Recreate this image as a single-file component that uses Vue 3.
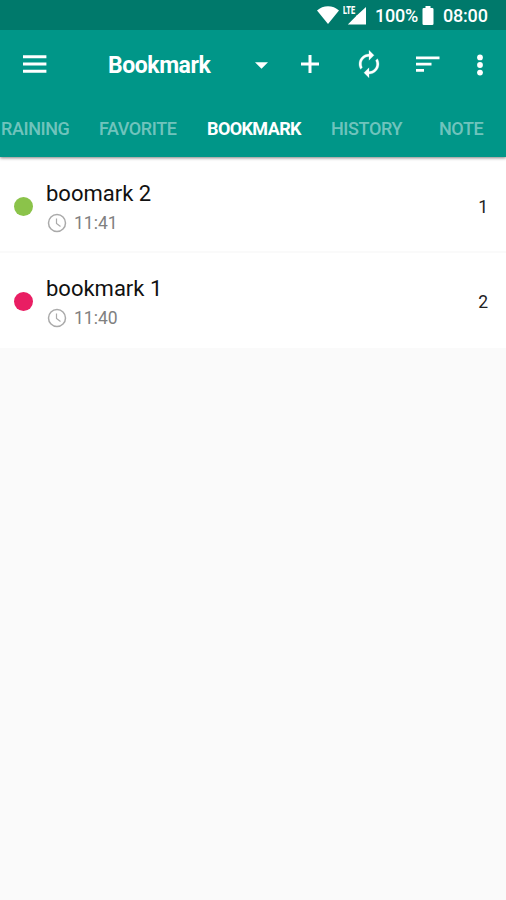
<script setup>
</script>

<template>
  <div class="screen">
    <header class="header">
      <div class="status">
        <svg class="wifi" width="22" height="18" viewBox="0 0 22 18">
          <path fill="#fff" d="M0 4.500C6 -1.200 16 -1.200 22 4.500L11 18z" />
        </svg>
        <svg class="signal" width="24" height="20" viewBox="0 0 24 20">
          <text x="0" y="9" textLength="12" lengthAdjust="spacingAndGlyphs">LTE</text>
          <path fill="#fff" d="M23 2V19.500H4.800L13 11.200V10.600H13.700z" />
        </svg>
        <span class="percent">100%</span>
        <svg class="battery" width="12" height="20" viewBox="0 0 12 20">
          <path fill="#fff" d="M3.500 0h5v2h1.700q1.300 0 1.300 1.300v14.400q0 1.300-1.300 1.300H1.800q-1.300 0-1.300-1.300V3.300Q.5 2 1.800 2h1.700z" />
        </svg>
        <span class="clock">08:00</span>
      </div>

      <div class="toolbar">
        <svg class="menu" width="24" height="18" viewBox="0 0 24 18">
          <path fill="#fff" d="M0 .3h23.400v3H0zM0 7.500h23.400v3H0zM0 14.700h23.400v3H0z" />
        </svg>
        <span class="title">Bookmark</span>
        <svg class="caret" width="13" height="7" viewBox="0 0 13 7">
          <path fill="#fff" d="M0 .3h13L6.500 6.800z" />
        </svg>
        <svg class="add" width="18" height="18" viewBox="0 0 18 18">
          <path fill="#fff" d="M7.500 0h3v7.500H18v3h-7.500V18h-3v-7.500H0v-3h7.500z" />
        </svg>
        <svg class="renew" width="30" height="30" viewBox="0 0 24 24">
          <path fill="#fff" stroke="#fff" stroke-width=".2" d="M12 6v3l4-4-4-4v3c-4.420 0-8 3.580-8 8 0 1.570.46 3.030 1.240 4.260L6.700 14.800C6.250 13.970 6 13.010 6 12c0-3.310 2.690-6 6-6zm6.760 1.740L17.300 9.200c.44.84.7 1.790.7 2.800 0 3.310-2.690 6-6 6v-3l-4 4 4 4v-3c4.420 0 8-3.580 8-8 0-1.570-.46-3.030-1.240-4.260z" />
        </svg>
        <svg class="sort" width="24" height="18" viewBox="0 0 24 18">
          <path fill="#fff" d="M0 1.400h23.500v2.800H0zM0 7.700h15.500v2.800H0zM0 14h8v2.800H0z" />
        </svg>
        <svg class="more" width="6" height="22" viewBox="0 0 6 22">
          <circle v-for="y in [3.400, 11, 18.600]" :key="y" cx="3" :cy="y" r="2.900" fill="#fff" />
        </svg>
      </div>

      <nav class="tabs">
        <span
          v-for="tab in tabs"
          :key="tab"
          :class="['tab', tab.toLowerCase(), { active: tab === current }]"
        >{{ tab }}</span>
      </nav>
    </header>

    <main class="list">
      <div class="row" v-for="item in items" :key="item.name">
        <span :class="['dot', item.color]"></span>
        <div class="info">
          <div class="name">{{ item.name }}</div>
          <div class="time">
            <svg width="20" height="20" viewBox="0 0 20 20" fill="none" stroke="#aaa">
              <circle cx="10" cy="10" r="8.500" stroke-width="1.500" />
              <path d="M9.500 5.500v5l4 3" stroke-width="1.200" />
            </svg>
            <span>{{ item.time }}</span>
          </div>
        </div>
        <span class="count">{{ item.count }}</span>
      </div>
    </main>
  </div>
</template>

<script>
export default {
  data() {
    return {
      current: "BOOKMARK",
      tabs: ["RAINING", "FAVORITE", "BOOKMARK", "HISTORY", "NOTE"],
      items: [
        { name: "boomark 2", time: "11:41", count: 1, color: "green" },
        { name: "bookmark 1", time: "11:40", count: 2, color: "pink" },
      ],
    };
  },
};
</script>

<style>
body {
  margin: 0;
  background: #fafafa;
}
</style>

<style scoped>
.screen {
  width: 506px;
  height: 900px;
  overflow: hidden;
  background: #fafafa;
  font-family: Roboto, sans-serif;
}

svg {
  display: block;
  flex: none;
}

.header {
  position: relative;
  height: 157px;
  background: #009688;
  box-shadow: 0 1px 3px rgba(0, 0, 0, 0.5);
}

.status {
  display: flex;
  align-items: center;
  box-sizing: border-box;
  height: 30px;
  padding-left: 316px;
  background: #00796b;
  color: #fff;
  font-size: 18px;
  font-weight: 500;
  letter-spacing: -0.2px;
  line-height: 30px;
}

.wifi {
  margin-left: 0.5px;
}

.signal {
  margin-left: 4.5px;
}

.signal text {
  fill: #fff;
  font-size: 10px;
  font-weight: 900;
  letter-spacing: 0;
}

.percent {
  width: 47px;
  margin-left: 8px;
  padding-top: 2px;
}

.battery {
  margin-top: 1px;
}

.clock {
  margin-left: 9px;
  padding-top: 2px;
}

.toolbar {
  display: flex;
  align-items: center;
  height: 68px;
  padding-left: 23px;
  color: #fff;
}

.title {
  width: 102px;
  margin-left: 61px;
  font-size: 23px;
  font-weight: 700;
  letter-spacing: -0.45px;
  white-space: nowrap;
  padding-top: 2px;
}

.caret {
  margin-left: 45px;
  margin-top: 2px;
}

.add {
  margin-left: 33px;
}

.renew {
  margin-left: 34.5px;
}

.sort {
  margin-left: 32px;
}

.more {
  margin-left: 37px;
  margin-top: 1px;
}

.tabs {
  display: flex;
  height: 59px;
  padding-left: 1px;
  line-height: 62px;
  color: rgba(255, 255, 255, 0.45);
  font-size: 18px;
  font-weight: 500;
  letter-spacing: -0.4px;
  white-space: nowrap;
}

.tab {
  flex: none;
}

.raining {
  width: 98px;
}

.favorite {
  width: 108px;
}

.bookmark {
  width: 124px;
}

.history {
  width: 108px;
}

.active {
  color: #fff;
  font-weight: 700;
  letter-spacing: -0.6px;
}

.row {
  display: flex;
  align-items: center;
  box-sizing: border-box;
  height: 96px;
  padding: 0 18px 0 14px;
  border-bottom: 2px solid #fafafa;
  background: #fff;
}

.row + .row {
  height: 95px;
  padding-bottom: 3px;
  border-bottom: 0;
}

.dot {
  width: 19px;
  height: 19px;
  margin-top: 4px;
  border-radius: 50%;
}

.green {
  background: #8bc34a;
}

.pink {
  background: #e91e63;
}

.info {
  flex: 1;
  margin-left: 13px;
  padding-top: 5px;
}

.name {
  color: #111;
  font-size: 22px;
  line-height: 28px;
  padding-top: 4px;
}

.time {
  display: flex;
  align-items: center;
  gap: 7px;
  height: 28px;
  margin-top: 1px;
  margin-left: 1px;
  color: #808080;
  font-size: 17.5px;
}

.count {
  margin-top: 5px;
  color: #222;
  font-size: 17.5px;
}
</style>
